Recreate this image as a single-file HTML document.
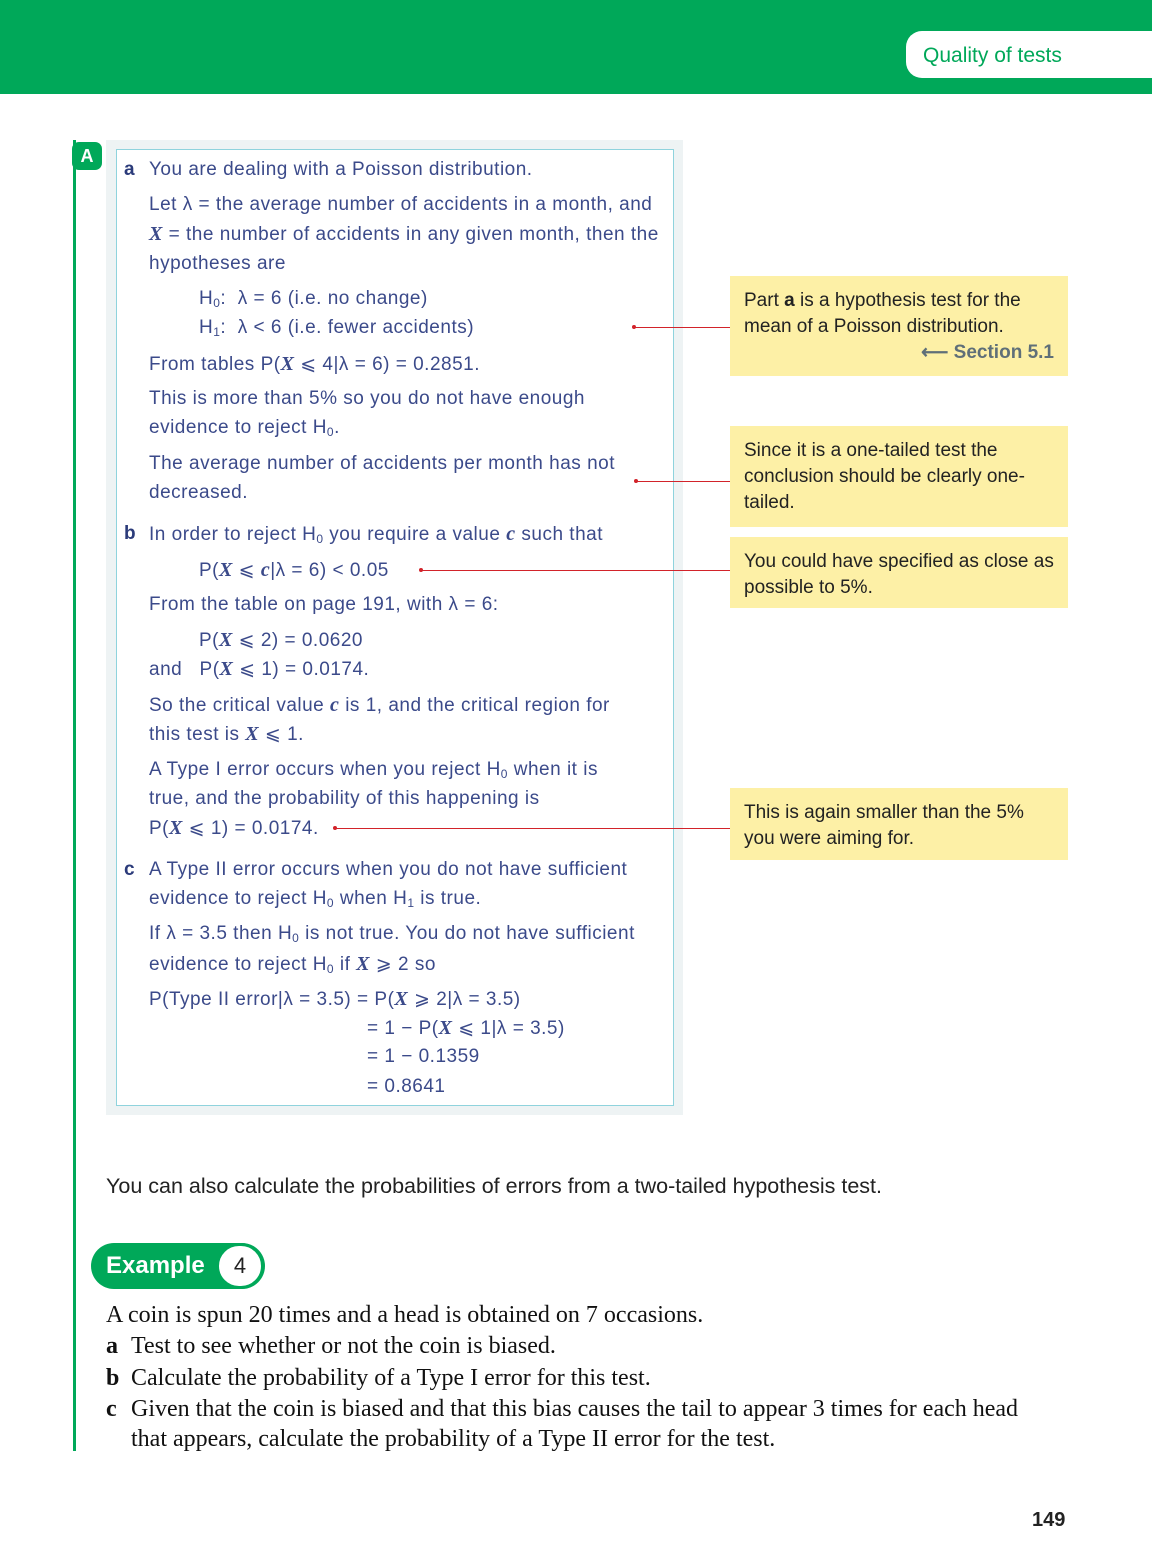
<!DOCTYPE html>
<html><head><meta charset="utf-8"><style>
*{margin:0;padding:0;box-sizing:border-box}
body{width:1152px;height:1565px;position:relative;background:#fff;font-family:"Liberation Sans",sans-serif;overflow:hidden}
.a{position:absolute;white-space:nowrap}
.h{position:absolute;white-space:nowrap;font-size:19px;letter-spacing:0.5px;color:#3b4a8a;font-family:"Liberation Sans",sans-serif;line-height:24px}
.h i{font-family:"Liberation Serif",serif;font-style:italic;font-weight:bold;font-size:20px}
.h b{font-weight:bold;color:#2b3b7a}
sub{font-size:12px;vertical-align:-3px}
.note{position:absolute;left:730px;width:338px;background:#fdf0a6;font-size:19px;line-height:26px;color:#222;padding:10px 14px}
.ln{position:absolute;height:1px;background:#d2232a}
.dot{position:absolute;width:4px;height:4px;border-radius:2px;background:#d2232a}
.s{position:absolute;white-space:nowrap;font-family:"Liberation Serif",serif;font-size:24px;color:#111;line-height:26px}
</style></head><body>
<div class="a" style="left:0;top:0;width:1152px;height:94px;background:#00a859"></div>
<div class="a" style="left:906px;top:31px;width:246px;height:47px;background:#fff;border-radius:16px 0 0 16px;color:#00a859;font-size:21px;line-height:49px;padding-left:17px">Quality of tests</div>
<div class="a" style="left:73px;top:140px;width:3px;height:1311px;background:#00a859"></div>
<div class="a" style="left:72px;top:142px;width:30px;height:28px;background:#00a859;border-radius:7px;color:#fff;font-weight:bold;font-size:18px;text-align:center;line-height:28px">A</div>
<div class="a" style="left:106px;top:140px;width:577px;height:975px;background:#eef3f4"></div>
<div class="a" style="left:116px;top:149px;width:558px;height:957px;background:#fff;border:1px solid #8fd3dd"></div>

<div class="h" style="left:124px;top:158px"><b>a</b></div>
<div class="h" style="left:149px;top:158px">You are dealing with a Poisson distribution.</div>
<div class="h" style="left:149px;top:193px">Let λ = the average number of accidents in a month, and</div>
<div class="h" style="left:149px;top:222px"><i>X</i> = the number of accidents in any given month, then the</div>
<div class="h" style="left:149px;top:252px">hypotheses are</div>
<div class="h" style="left:199px;top:287px">H<sub>0</sub>:&nbsp; λ = 6 (i.e. no change)</div>
<div class="h" style="left:199px;top:316px">H<sub>1</sub>:&nbsp;&nbsp;λ &lt; 6 (i.e. fewer accidents)</div>
<div class="h" style="left:149px;top:352px">From tables P(<i>X</i> ⩽ 4|λ = 6) = 0.2851.</div>
<div class="h" style="left:149px;top:387px">This is more than 5% so you do not have enough</div>
<div class="h" style="left:149px;top:416px">evidence to reject H<sub>0</sub>.</div>
<div class="h" style="left:149px;top:452px">The average number of accidents per month has not</div>
<div class="h" style="left:149px;top:481px">decreased.</div>
<div class="h" style="left:124px;top:522px"><b>b</b></div>
<div class="h" style="left:149px;top:522px">In order to reject H<sub>0</sub> you require a value <i>c</i> such that</div>
<div class="h" style="left:199px;top:558px">P(<i>X</i> ⩽ <i>c</i>|λ = 6) &lt; 0.05</div>
<div class="h" style="left:149px;top:593px">From the table on page 191, with λ = 6:</div>
<div class="h" style="left:199px;top:628px">P(<i>X</i> ⩽ 2) = 0.0620</div>
<div class="h" style="left:149px;top:657px">and&nbsp;&nbsp; P(<i>X</i> ⩽ 1) = 0.0174.</div>
<div class="h" style="left:149px;top:693px">So the critical value <i>c</i> is 1, and the critical region for</div>
<div class="h" style="left:149px;top:722px">this test is <i>X</i> ⩽ 1.</div>
<div class="h" style="left:149px;top:758px">A Type I error occurs when you reject H<sub>0</sub> when it is</div>
<div class="h" style="left:149px;top:787px">true, and the probability of this happening is</div>
<div class="h" style="left:149px;top:816px">P(<i>X</i> ⩽ 1) = 0.0174.</div>
<div class="h" style="left:124px;top:858px"><b>c</b></div>
<div class="h" style="left:149px;top:858px">A Type II error occurs when you do not have sufficient</div>
<div class="h" style="left:149px;top:887px">evidence to reject H<sub>0</sub> when H<sub>1</sub> is true.</div>
<div class="h" style="left:149px;top:922px">If λ = 3.5 then H<sub>0</sub> is not true. You do not have sufficient</div>
<div class="h" style="left:149px;top:952px">evidence to reject H<sub>0</sub> if <i>X</i> ⩾ 2 so</div>
<div class="h" style="left:149px;top:987px">P(Type II error|λ = 3.5) = P(<i>X</i> ⩾ 2|λ = 3.5)</div>
<div class="h" style="left:367px;top:1016px">= 1 − P(<i>X</i> ⩽ 1|λ = 3.5)</div>
<div class="h" style="left:367px;top:1045px">= 1 − 0.1359</div>
<div class="h" style="left:367px;top:1075px">= 0.8641</div>

<div class="dot" style="left:632px;top:325px"></div><div class="ln" style="left:634px;top:327px;width:96px"></div>
<div class="dot" style="left:634px;top:479px"></div><div class="ln" style="left:636px;top:481px;width:94px"></div>
<div class="dot" style="left:419px;top:568px"></div><div class="ln" style="left:421px;top:570px;width:309px"></div>
<div class="dot" style="left:333px;top:826px"></div><div class="ln" style="left:335px;top:828px;width:395px"></div>

<div class="note" style="top:276px;height:100px;padding-top:12px">Part <b>a</b> is a hypothesis test for the mean of a Poisson distribution.<div style="text-align:right;color:#5f6f78;font-weight:bold">⟵ Section 5.1</div></div>
<div class="note" style="top:426px;height:101px;padding-top:12px">Since it is a one-tailed test the conclusion should be clearly one-tailed.</div>
<div class="note" style="top:537px;height:71px;padding-top:12px">You could have specified as close as possible to 5%.</div>
<div class="note" style="top:788px;height:72px;padding-top:12px">This is again smaller than the 5% you were aiming for.</div>

<div class="a" style="left:106px;top:1174px;font-size:21.5px;color:#222">You can also calculate the probabilities of errors from a two-tailed hypothesis test.</div>

<div class="a" style="left:91px;top:1243px;width:174px;height:46px;border-radius:23px;background:#00a859"></div>
<div class="a" style="left:106px;top:1250px;color:#fff;font-weight:bold;font-size:24px;line-height:32px">Example</div>
<div class="a" style="left:216px;top:1243px;width:48px;height:46px;border-radius:23px;background:#fff;border:3px solid #00a859;color:#222;font-size:22px;text-align:center;line-height:40px">4</div>

<div class="s" style="left:106px;top:1302px">A coin is spun 20 times and a head is obtained on 7 occasions.</div>
<div class="s" style="left:106px;top:1333px"><b>a</b></div><div class="s" style="left:131px;top:1333px">Test to see whether or not the coin is biased.</div>
<div class="s" style="left:106px;top:1365px"><b>b</b></div><div class="s" style="left:131px;top:1365px">Calculate the probability of a Type I error for this test.</div>
<div class="s" style="left:106px;top:1396px"><b>c</b></div><div class="s" style="left:131px;top:1396px">Given that the coin is biased and that this bias causes the tail to appear 3 times for each head</div>
<div class="s" style="left:131px;top:1426px">that appears, calculate the probability of a Type II error for the test.</div>

<div class="a" style="left:1032px;top:1509px;font-size:20px;font-weight:bold;color:#222">149</div>
</body></html>
